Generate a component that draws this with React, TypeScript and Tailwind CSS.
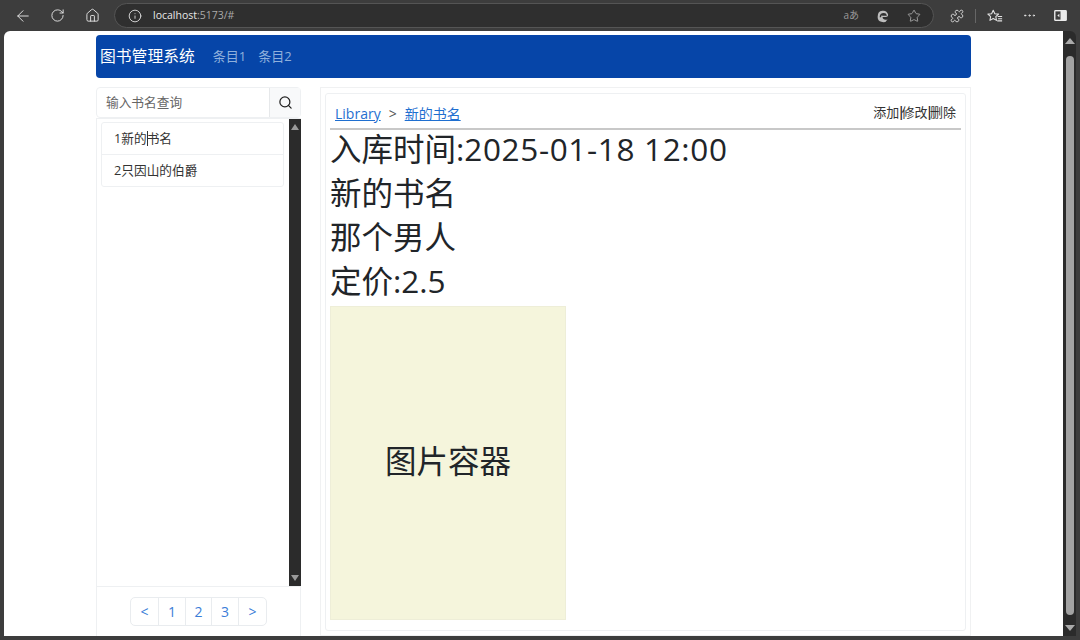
import { ArrowLeft, Ellipsis, Home, Info, RotateCw, Search, Star, Puzzle } from "lucide-react";

const fontStack = "font-['Open_Sans','Noto_Sans_CJK_SC',sans-serif]";

const EdgeIcon = () => (
  <svg viewBox="0 0 16 16" className="ml-[17px] size-[14px]" fill="none">
    <path d="M2 8a6 6 0 0 1 11.8-1.6c.3 1.6-1 2.6-2.6 2.6H7.5c0 2 1.6 3.2 3.4 3.2 1 0 1.8-.2 2.4-.6A6 6 0 0 1 2 8Z" fill="#bdbdbd" />
    <path d="M5 9.5C5 6.8 7 5.4 9 5.4c1.3 0 2.2.6 2.4 1.6H7" stroke="#2f2f2f" strokeWidth="1.6" />
  </svg>
);

const FavoritesIcon = () => (
  <svg viewBox="0 0 18 16" className="ml-[11px] size-[16px]" fill="none" stroke="#e4e4e4" strokeWidth="1.2" strokeLinejoin="round">
    <path d="M7 1.5 8.8 5.4l4.2.5-3.1 2.8.8 4.2L7 10.8 3.3 12.900l.8-4.200L1 5.900l4.200-.5Z" />
    <path d="M12 8.500h5M12.500 11h4.500M11.500 13.500h5.500" />
  </svg>
);

const SplitScreenIcon = () => (
  <svg viewBox="0 0 14 12" className="ml-[17px] w-[13px] h-[11px]">
    <rect x="0" y="0" width="14" height="12" rx="1.500" fill="#ececec" />
    <rect x="1.500" y="1.500" width="5.500" height="9" fill="#3d3d3d" />
    <path d="M5.800 4 3.500 6l2.300 2Z" fill="#ececec" />
  </svg>
);

const BrowserBar = () => (
  <div className="h-[31px] bg-[#3d3d3d] flex items-center text-[#e4e4e4] shrink-0">
    <ArrowLeft className="size-[18px] ml-[14px]" strokeWidth={1.25} />
    <RotateCw className="size-[15px] ml-[18px]" strokeWidth={1.5} />
    <Home className="size-[15px] ml-[20px]" strokeWidth={1.5} />
    <div className="ml-[14px] w-[820px] h-[25px] rounded-full bg-[#2f2f2f] border border-[#555] flex items-center pl-[13px] pr-[12px]">
      <Info className="size-[14px]" strokeWidth={1.5} />
      <span className="ml-[11px] text-[10.5px] text-[#e8e8e8]">
        localhost<span className="text-[#aaa]">:5173/#</span>
      </span>
      <span className="ml-auto text-[10px] text-[#999]">aあ</span>
      <EdgeIcon />
      <Star className="ml-[17px] size-[14px] text-[#aaa]" strokeWidth={1.5} />
    </div>
    <Puzzle className="ml-[16px] size-[14px]" strokeWidth={1.5} />
    <div className="ml-[11px] w-px h-[14px] bg-[#666]" />
    <FavoritesIcon />
    <Ellipsis className="ml-[19px] size-[15px]" strokeWidth={1.5} />
    <SplitScreenIcon />
  </div>
);

const PageScrollbar = () => (
  <div className="w-[13px] bg-[#2b2b2b] flex flex-col items-center rounded-tr-[6px]">
    <div className="mt-[7px] size-0 border-x-[5px] border-x-transparent border-b-[6px] border-b-[#aaa]" />
    <div className="mt-[12px] w-[8px] flex-1 rounded-full bg-[#a3a3a3]" />
    <div className="mt-[10px] mb-[5px] size-0 border-x-[5px] border-x-transparent border-t-[6px] border-t-[#aaa]" />
  </div>
);

const Sidebar = () => (
  <div className="w-[205px] flex flex-col">
    <div className="h-[31px] flex border border-[#eef0f2] rounded-[4px]">
      <div className="flex-1 pl-[9px] text-[12.7px] text-[#666] flex items-center">输入书名查询</div>
      <div className="w-[31px] bg-[#f8f9fa] border-l border-[#e6e8ea] flex items-center justify-center">
        <Search className="size-[15px] text-[#222]" strokeWidth={2} />
      </div>
    </div>
    <div className="h-[469px] flex border border-[#eef0f2] border-r-0">
      <div className="flex-1 pt-[3px] pl-[4px] pr-[5px]">
        <div className="border border-[#eef0f2] rounded-[3px] text-[12.7px] text-[#333]">
          <div className="relative h-[32px] pl-[12px] flex items-center border-b border-[#eef0f2]">
            1新的书名
            <span className="absolute left-[45px] top-[8px] w-px h-[15px] bg-[#333]" />
          </div>
          <div className="h-[31px] pl-[12px] flex items-center">2只因山的伯爵</div>
        </div>
      </div>
      <div className="w-[12px] bg-[#2b2b2b] flex flex-col items-center justify-between py-[5px]">
        <div className="size-0 border-x-[4px] border-x-transparent border-b-[6px] border-b-[#999]" />
        <div className="size-0 border-x-[4px] border-x-transparent border-t-[6px] border-t-[#999]" />
      </div>
    </div>
    <div className="flex-1 border-x border-[#eef0f2] flex justify-center pt-[10px]">
      <div className="h-[29px] flex border border-[#e9ecef] rounded-[5px] text-[14px] text-[#3b7dd8]">
        <div className="w-[28px] flex items-center justify-center border-r border-[#e9ecef]">&lt;</div>
        <div className="w-[27px] flex items-center justify-center border-r border-[#e9ecef]">1</div>
        <div className="w-[26px] flex items-center justify-center border-r border-[#e9ecef]">2</div>
        <div className="w-[27px] flex items-center justify-center border-r border-[#e9ecef]">3</div>
        <div className="w-[27px] flex items-center justify-center">&gt;</div>
      </div>
    </div>
  </div>
);

const Pipe = () => <span className="font-['Liberation_Sans'] text-[15px] text-[#222] tracking-[-1.5px]">|</span>;

const Detail = () => (
  <div className="w-[651px] ml-[19px] border border-[#f0f1f2] px-[4px] py-[5px]">
    <div className="h-[538px] border border-[#eef0f2] rounded-[3px] px-[4px]">
      <div className="h-[36px] flex items-center justify-between border-b-2 border-[#c8c8c8] px-[5px] text-[14px]">
        <div className="flex items-center gap-[8px] pt-[4px]">
          <a href="#" className="text-[#1f6fd0] underline">Library</a>
          <span className="text-[#555]">&gt;</span>
          <a href="#" className="text-[#1f6fd0] underline">新的书名</a>
        </div>
        <span className="text-[13px] text-[#333] pt-[3px]">添加<Pipe />修改<Pipe />删除</span>
      </div>
      <div className="-mt-[3px] text-[31.5px] leading-[44px] text-[#212529]">
        <div className="whitespace-nowrap">入库时间:<span className="tracking-[0.65px]">2025-01-18 12:00</span></div>
        <div>新的书名</div>
        <div>那个男人</div>
        <div>定价:2.5</div>
      </div>
      <div className="mt-[3px] pb-[4px] w-[236px] h-[314px] bg-[#f5f5dc] border border-[#eeeed8] flex items-center justify-center text-[31.5px] text-[#212529]">
        图片容器
      </div>
    </div>
  </div>
);

export default function App() {
  return (
    <div className={`w-[1080px] h-[640px] overflow-hidden bg-[#3d3d3d] flex flex-col ${fontStack}`}>
      <BrowserBar />
      <div className="flex-1 min-h-0 flex pl-[4px] pr-[4px] pb-[4px]">
        <div className="w-[1059px] bg-white rounded-tl-[6px] pl-[92px] pt-[4px] flex flex-col min-h-0 overflow-hidden">
          <div className="w-[875px] h-[43px] shrink-0 bg-[#0645a8] rounded-[4px] flex items-center pl-[4px]">
            <span className="text-[15.8px] text-white">图书管理系统</span>
            <span className="ml-[18px] text-[13px] text-[#8fb0dc]">条目1</span>
            <span className="ml-[12px] text-[13px] text-[#8fb0dc]">条目2</span>
          </div>
          <div className="mt-[9px] flex-1 min-h-0 flex">
            <Sidebar />
            <Detail />
          </div>
        </div>
        <PageScrollbar />
      </div>
    </div>
  );
}
